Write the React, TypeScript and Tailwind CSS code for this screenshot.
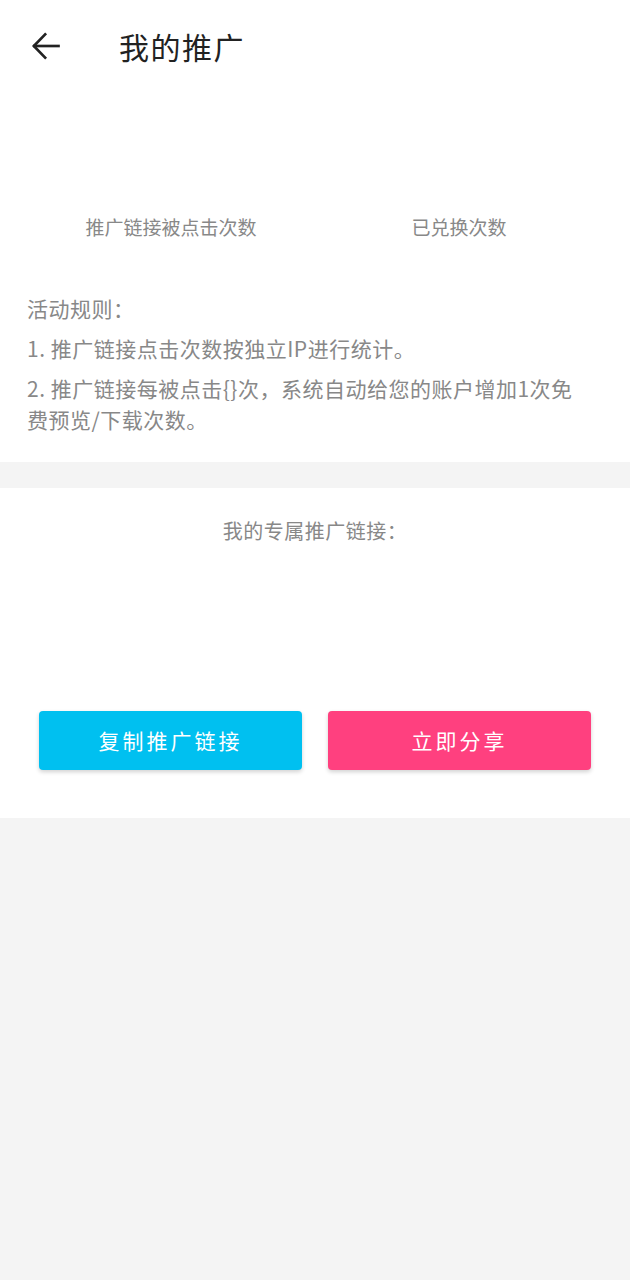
import React from "react";

const FONT = { fontFamily: '"Noto Sans CJK SC", "Noto Sans", sans-serif' };

function BackArrow() {
    return (
        <svg width="30" height="30" viewBox="3 3 18 18" fill="none" stroke="#222" strokeWidth="1.6" strokeLinecap="square">
            <path d="M19.5 12H5" />
            <path d="M11.5 5 4.7 12l6.8 7" />
        </svg>
    );
}

export default function App() {
    return (
        <div className="min-h-[1280px] w-[630px] bg-[#f4f4f4]" style={FONT}>
            {/* Header + stats + rules */}
            <div className="bg-white">
                <div className="flex h-[92px] items-center">
                    <div className="flex w-[119px] items-center pl-[31px]">
                        <BackArrow />
                    </div>
                    <h1 className="text-[30px] leading-none tracking-[1.5px] text-[#222]">我的推广</h1>
                </div>

                {/* Stats */}
                <div className="flex px-[27px] pt-[122px]">
                    <div className="flex flex-1 flex-col items-center">
                        <span className="text-[19px] leading-[26px] text-[#888]">推广链接被点击次数</span>
                    </div>
                    <div className="flex flex-1 flex-col items-center">
                        <span className="text-[19px] leading-[26px] text-[#888]">已兑换次数</span>
                    </div>
                </div>

                {/* Rules */}
                <div className="space-y-[9px] pb-[27px] pl-[27px] pr-[38px] pt-[53px] text-[21px] leading-[31px] tracking-[0.5px] text-[#888]">
                    <p>活动规则：</p>
                    <p>1. 推广链接点击次数按独立IP进行统计。</p>
                    <p>2. 推广链接每被点击{"{}"}次，系统自动给您的账户增加1次免费预览/下载次数。</p>
                </div>
            </div>

            {/* Link section */}
            <div className="mt-[26px] bg-white pb-[48px] pt-[27px]">
                <p className="text-center text-[20px] leading-[31px] tracking-[0.5px] text-[#888]">我的专属推广链接：</p>
                <div className="flex justify-between px-[39px] pt-[165px]">
                    <button className="h-[59px] w-[263px] rounded-[4px] bg-[#00c0f0] text-[21px] tracking-[3px] text-white shadow-[0_2px_4px_rgba(0,0,0,0.18)]">
                        复制推广链接
                    </button>
                    <button className="h-[59px] w-[263px] rounded-[4px] bg-[#ff407f] text-[21px] tracking-[3px] text-white shadow-[0_2px_4px_rgba(0,0,0,0.18)]">
                        立即分享
                    </button>
                </div>
            </div>
        </div>
    );
}
